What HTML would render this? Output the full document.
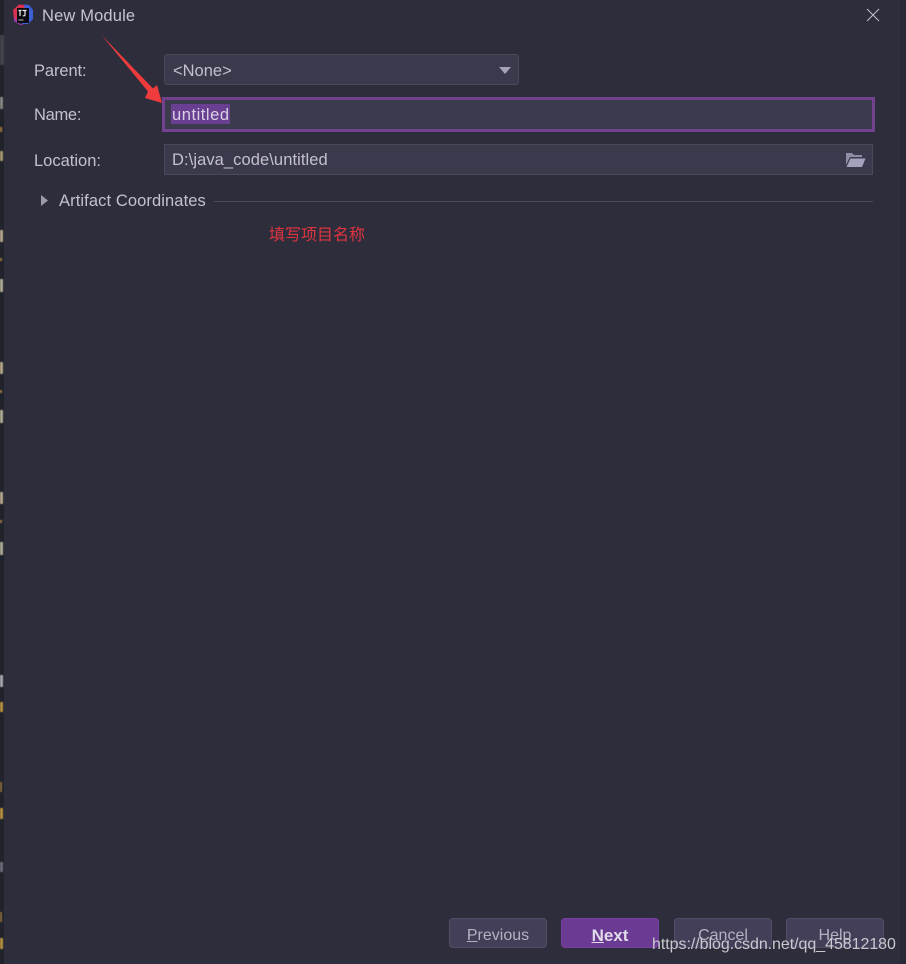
<!DOCTYPE html>
<html lang="zh"><head><meta charset="utf-8"><title>New Module</title>
<style>
html,body{margin:0;padding:0;background:#2e2d3c}
#p{position:relative;width:906px;height:964px;overflow:hidden;background:#2e2d3c;font-family:"Liberation Sans","Noto Sans CJK SC",sans-serif;color:#c3c1cd;font-size:16.5px}
#p div,#p span.a{position:absolute;white-space:nowrap;box-sizing:border-box}
.t{line-height:20px;height:20px}
.f{background:#3b3a4c;border:1px solid #4a4959}
.b{width:98px;height:30px;top:918px;background:#433f58;border:1px solid #514e66;border-radius:4px;text-align:center;line-height:33px;color:#b4b2c2;font-size:16px}
#s div{filter:blur(.6px)}
</style></head><body><div id="p">
<div id="s" style="left:0;top:0;width:4px;height:964px;background:#20222c">
<div style="left:0;top:35px;width:4px;height:30px;background:#43434c"></div>
<div style="left:0;top:97px;width:3px;height:12px;background:#8a8a85"></div>
<div style="left:0;top:127px;width:2px;height:5px;background:#a5793c"></div>
<div style="left:0;top:151px;width:3px;height:10px;background:#a89a70"></div>
<div style="left:0;top:230px;width:3px;height:12px;background:#b5a88c"></div>
<div style="left:0;top:258px;width:2px;height:3px;background:#a07a40"></div>
<div style="left:0;top:279px;width:3px;height:13px;background:#b0ad94"></div>
<div style="left:0;top:362px;width:3px;height:12px;background:#b5a88c"></div>
<div style="left:0;top:390px;width:2px;height:3px;background:#a07a40"></div>
<div style="left:0;top:410px;width:3px;height:13px;background:#b0ad94"></div>
<div style="left:0;top:492px;width:3px;height:12px;background:#b5a88c"></div>
<div style="left:0;top:520px;width:2px;height:3px;background:#a07a40"></div>
<div style="left:0;top:542px;width:3px;height:13px;background:#b0ad94"></div>
<div style="left:0;top:675px;width:3px;height:12px;background:#a9a9b0"></div>
<div style="left:0;top:702px;width:3px;height:10px;background:#b8923f"></div>
<div style="left:0;top:782px;width:2px;height:10px;background:#8a6a3a"></div>
<div style="left:0;top:808px;width:3px;height:11px;background:#b8923f"></div>
<div style="left:0;top:862px;width:3px;height:10px;background:#6d6d78"></div>
<div style="left:0;top:912px;width:2px;height:10px;background:#8a6a3a"></div>
<div style="left:0;top:938px;width:3px;height:11px;background:#b8923f"></div>
</div>
<div style="left:900px;top:0;width:6px;height:964px;background:#2a2a36"></div>

<svg style="position:absolute;left:12px;top:4px" width="22" height="21" viewBox="0 0 22 21">
<path d="M1 6 L7 0.500 L13 1 L14 5 L6 19 L2 15Z" fill="#d8324f"/>
<path d="M12 0.500 L17 1 L21 6 L21 15 L16 20 L10 20 L13 8Z" fill="#3d5fd8"/>
<path d="M2 13 L8 20 L13 20 L8 21 L2 17Z" fill="#a83ab0"/>
<rect x="5" y="4" width="12" height="15" fill="#0c0c12"/>
<rect x="6.500" y="15.500" width="5" height="1" fill="#bbb"/>
<path d="M6.500 6.500H9.500M8 6.500V12M10.500 6.500H14.500M13 6.500V11Q13 12 10.800 11.800" stroke="#eee" stroke-width="1.200" fill="none"/>
</svg>
<div class="t" style="left:42px;top:6px;color:#c6c4cf;letter-spacing:.15px">New Module</div>
<svg style="position:absolute;left:866px;top:8px" width="14" height="14" viewBox="0 0 14 14"><path d="M1 1L13 13M13 1L1 13" stroke="#c2c1cb" stroke-width="1" fill="none"/></svg>

<div class="t" style="left:34px;top:61px;letter-spacing:-.1px">Parent:</div>
<div class="f" style="left:164px;top:54px;width:355px;height:31px;border-radius:3px"></div>
<div class="t" style="left:173px;top:61px">&lt;None&gt;</div>
<svg style="position:absolute;left:498px;top:66px" width="14" height="9" viewBox="0 0 14 9"><path d="M1 1H13L7 8Z" fill="#a5a2b8"/></svg>

<div class="t" style="left:34px;top:105px;letter-spacing:-.3px">Name:</div>
<div style="left:162px;top:97px;width:713px;height:35px;background:#3c3a4d;border:3px solid #72428f"></div>
<div style="left:171px;top:104px;width:59px;height:20px;background:#693f92"></div>
<div class="t" style="left:172px;top:105px;color:#d9d2e4;letter-spacing:.55px">untitled</div>

<div class="t" style="left:34px;top:151px">Location:</div>
<div class="f" style="left:164px;top:144px;width:709px;height:31px"></div>
<div class="t" style="left:172px;top:150px;letter-spacing:.08px">D:\java_code\untitled</div>
<svg style="position:absolute;left:845px;top:152px" width="21" height="16" viewBox="0 0 21 16"><path d="M1 1H7L9 3H17V5H5L1 13Z" fill="#8e8ca6"/><path d="M5.500 6.500H20.500L17 15H1.500Z" fill="#a3a1bb"/></svg>

<svg style="position:absolute;left:40px;top:194px" width="9" height="13" viewBox="0 0 9 13"><path d="M1 1L8 6.500L1 12Z" fill="#9c9aa8"/></svg>
<div class="t" style="left:59px;top:191px;letter-spacing:.1px">Artifact Coordinates</div>
<div style="left:214px;top:201px;width:659px;height:1px;background:#4b4a5a"></div>

<div class="t" style="left:269px;top:226px;color:#e0343f;font-size:16px;font-family:'Liberation Sans','Noto Sans CJK SC',sans-serif">填写项目名称</div>

<svg style="position:absolute;left:95px;top:30px" width="75" height="78" viewBox="95 30 75 78"><path d="M101.500 35L153 88.500L157 85L162 103L145 98L148 91.500Z" fill="#ee3b3b"/></svg>

<div class="b" style="left:449px"><u>P</u>revious</div>
<div class="b" style="left:561px;background:#6b3a93;border-color:#763fa0;color:#e0dcea;font-weight:bold;font-size:17px"><u>N</u>ext</div>
<div class="b" style="left:674px">Cancel</div>
<div class="b" style="left:786px">Help</div>
<div class="t" style="left:652px;top:935px;color:#c9c9cf;font-size:16px;letter-spacing:-.05px">https://blog.csdn.net/qq_45812180</div>
</div></body></html>
